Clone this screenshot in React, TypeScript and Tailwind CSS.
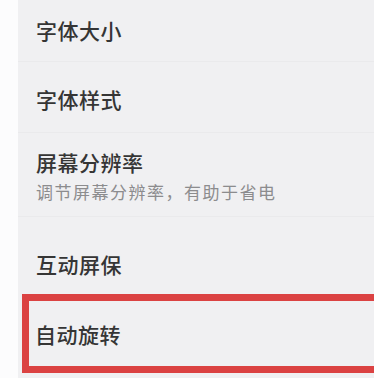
import React from 'react';

const font = { fontFamily: '"Noto Sans CJK SC", "Noto Sans", sans-serif' };

const Row: React.FC<{ title: string; sub?: string; className?: string }> = ({ title, sub, className }) => (
  <div className={`flex flex-col justify-center border-b border-[#eaeaec] ${className ?? ''}`}>
    <div className="text-[21px] leading-[26px] font-medium text-[#353535] tracking-[0.5px]">{title}</div>
    {sub && <div className="mt-[6px] text-[17px] leading-[22px] text-[#8c8c8e] tracking-[1.5px]">{sub}</div>}
  </div>
);

const App: React.FC = () => {
  return (
    <div className="w-[374px] h-[378px] overflow-hidden flex bg-[#fbfbfc]" style={font}>
      <div className="w-[18px] shrink-0 bg-[#fcfcfd]" />
      <div className="flex-1 flex flex-col bg-[#f0f0f2]">
        <Row title="字体大小" className="h-[62px] pl-[18px] pb-[1px]" />
        <Row title="字体样式" className="h-[71px] pl-[18px] pt-[4px]" />
        <Row title="屏幕分辨率" sub="调节屏幕分辨率，有助于省电" className="h-[84px] pl-[18px] pt-[2px]" />
        <Row title="互动屏保" className="h-[77px] pl-[18px] pt-[16px] border-b-0" />
        <div className="h-[79px] ml-[4px] flex items-center border-[7px] border-r-0 border-[#db4242] pl-[6px] pt-[1px]">
          <div className="text-[21px] leading-[26px] font-medium text-[#353535] tracking-[0.5px]">自动旋转</div>
        </div>
      </div>
    </div>
  );
};

export default App;
